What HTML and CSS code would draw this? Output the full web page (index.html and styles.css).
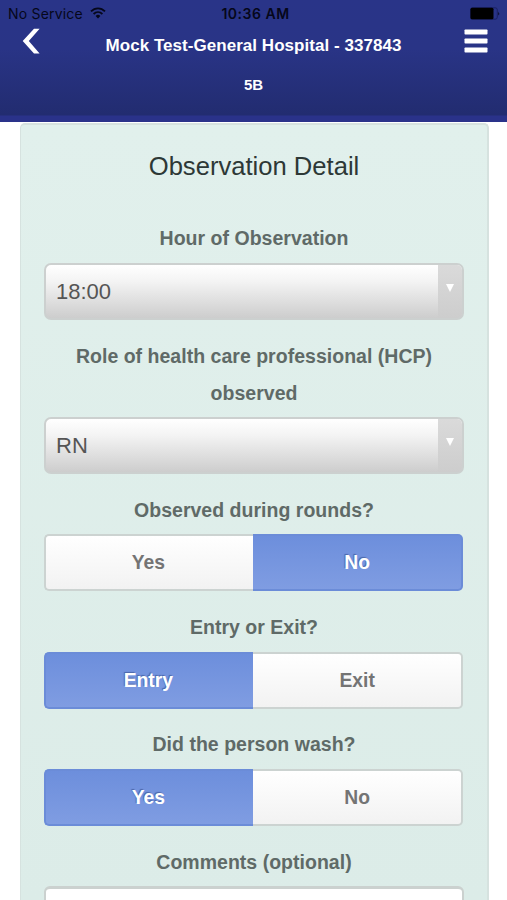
FILE: index.html
```html
<!DOCTYPE html>
<html lang="en">
<head>
<meta charset="utf-8">
<title>Observation Detail</title>
<link rel="stylesheet" href="styles.css">
</head>
<body>
<header class="header">
  <div class="status">
    <div class="carrier"><span>No Service</span>
      <svg class="wifi" width="16" height="12" viewBox="0 0 16 12" fill="none" stroke="#05071a" stroke-width="1.8"><path d="M1 4.4C5 .3 11 .3 15 4.4"/><path d="M3.6 7C6.2 4.5 9.800 4.500 12.400 7"/><path d="M5.600 9L8 11.600 10.400 9Q8 6.700 5.600 9Z" fill="#05071a" stroke="none"/></svg>
    </div>
    <time class="clock">10:36 AM</time>
    <svg class="battery" width="30" height="13" viewBox="0 0 30 13"><rect x=".5" y=".8" width="26.800" height="11.400" rx="2" fill="none" stroke="#171c5c" stroke-width=".8"/><rect x=".5" y=".8" width="23" height="11.400" rx="1.500" fill="#000"/><path d="M28.300 4.500Q30 6.500 28.300 8.500Z" fill="#05071a"/></svg>
  </div>
  <div class="nav">
    <svg class="back" width="18" height="26" viewBox="0 0 18 26"><path d="M12 .8H17.600L6.800 12.900L17.600 25.400H12L.7 12.900Z" fill="#fff"/></svg>
    <h1 class="facility">Mock Test-General Hospital - 337843</h1>
    <svg class="menu" width="24" height="24" viewBox="0 0 24 24" fill="#fff"><rect x=".5" y=".5" width="23" height="5" rx=".8"/><rect x=".5" y="9.500" width="23" height="5" rx=".8"/><rect x=".5" y="18.500" width="23" height="5" rx=".8"/></svg>
  </div>
  <div class="unit">5B</div>
</header>
<main class="card">
  <h2 class="title">Observation Detail</h2>
  <section class="field"><div class="label">Hour of Observation</div>
    <div class="select"><span class="value">18:00</span><span class="arrow"><svg width="10" height="10" viewBox="0 0 10 10"><path d="M1 1H9L5 9Z" fill="#fff"/></svg></span></div></section>
  <section class="field"><div class="label">Role of health care professional (HCP) observed</div>
    <div class="select"><span class="value">RN</span><span class="arrow"><svg width="10" height="10" viewBox="0 0 10 10"><path d="M1 1H9L5 9Z" fill="#fff"/></svg></span></div></section>
  <section class="field"><div class="label">Observed during rounds?</div>
    <div class="toggle"><span class="option">Yes</span><span class="option active">No</span></div></section>
  <section class="field"><div class="label">Entry or Exit?</div>
    <div class="toggle"><span class="option active">Entry</span><span class="option">Exit</span></div></section>
  <section class="field"><div class="label">Did the person wash?</div>
    <div class="toggle"><span class="option active">Yes</span><span class="option">No</span></div></section>
  <section class="field"><div class="label">Comments (optional)</div>
    <div class="comments"></div></section>
</main>
</body>
</html>
```
FILE: styles.css
```css
* { box-sizing: border-box; }
body {
  margin: 0;
  height: 900px;
  overflow: hidden;
  background: #fff;
  font-family: "Liberation Sans", Arial, sans-serif;
}
.header {
  height: 122px;
  color: #fff;
  background: linear-gradient(#293488, #293486 40%, #222c70 115px, #2a328a 116px);
}
.status {
  display: grid;
  grid-template-columns: 1fr auto 1fr;
  align-items: center;
  height: 27px;
  padding: 0 7px 0 8px;
  color: #05071a;
  font: 14px/27px Inter, sans-serif;
}
.carrier { display: flex; align-items: center; gap: 7px; letter-spacing: .2px; }
.wifi { margin-top: -1px; }
.clock { margin-left: 3px; font-weight: 600; letter-spacing: .5px; }
.battery { justify-self: end; }
.nav {
  display: grid;
  grid-template-columns: 50px 1fr 50px;
  grid-template-rows: 28px;
  align-items: center;
  height: 28px;
}
.back { margin-left: 22px; }
.menu { margin-left: 7px; margin-top: -1px; }
.facility {
  margin: 9px 0 0;
  text-align: center;
  font-size: 17px;
  line-height: 20px;
  letter-spacing: .04px;
  white-space: nowrap;
}
.unit { margin-top: 20px; text-align: center; font-weight: bold; font-size: 15px; line-height: 20px; }
.card {
  width: 469px;
  height: 777px;
  margin: 1px 0 0 20px;
  padding: 22.500px 22.500px 0 22.500px;
  border: 2px solid #d6e2df;
  border-width: 2px 2px 0 1px;
  border-radius: 5px 5px 0 0;
  overflow: hidden;
  background: linear-gradient(#e1f0ec, #dcece8);
  text-align: center;
}
.title { margin: 0; font-size: 25.600px; line-height: 36px; font-weight: normal; color: #2d3836; }
.title + .field { margin-top: 36.300px; }
.field { margin-bottom: 17.300px; }
.label { margin-bottom: 5.500px; padding: .5px 20px 0; font-size: 19.500px; line-height: 37px; font-weight: bold; letter-spacing: .02px; color: #5f6a67; }
.select {
  display: flex;
  justify-content: space-between;
  width: 420.500px;
  height: 57px;
  border: 2px solid #ccd0cf;
  border-radius: 7px;
  overflow: hidden;
  background: linear-gradient(#fff, #f4f4f4 30%, #cdcdcd);
}
.value { padding-left: 10.500px; font-size: 22px; line-height: 54px; color: #555; }
.arrow { width: 24.500px; padding: 18px 7px 0 7.500px; background: linear-gradient(#dadada, #cdcdcd); line-height: 0; }
.toggle { display: flex; width: 419.500px; height: 57px; }
.option {
  width: 50%;
  border: 2px solid #ccd3d1;
  border-radius: 5px 0 0 5px;
  border-right: 0;
  background: linear-gradient(#fff, #f2f2f2);
  font-size: 19.300px;
  line-height: 53px;
  font-weight: bold;
  color: #747474;
}
.option + .option { border-left: 0; border-right: 2px solid #ccd3d1; border-radius: 0 5px 5px 0; }
.option:first-child { padding-right: 2px; }
.option.active, .option + .option.active {
  border-color: #6b8cd8;
  background: linear-gradient(#6c8edc, #809de2);
  background-origin: border-box;
  color: #fff;
  text-shadow: -1px -1px 1px #4b66a9;
}
.comments { width: 420.500px; height: 90px; border: 2px solid #cbd1cf; border-top-width: 3px; border-radius: 6px; background: #fff; }
```
